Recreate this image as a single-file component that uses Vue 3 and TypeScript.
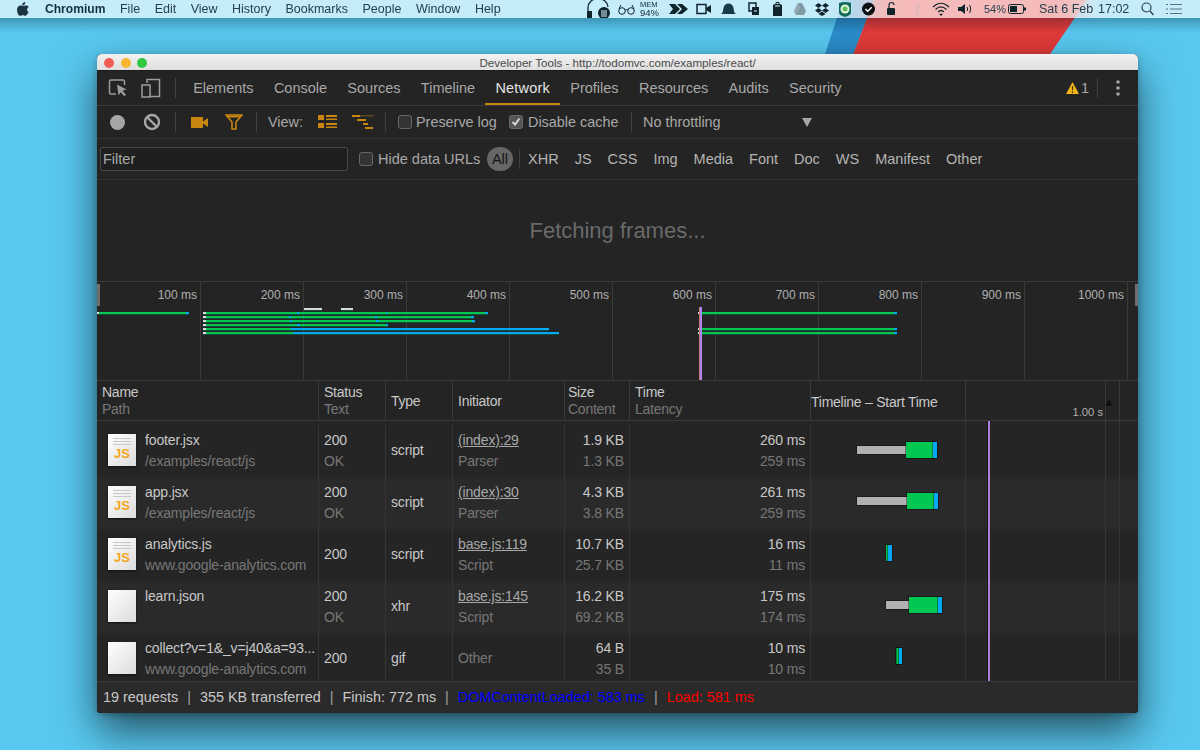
<script setup lang="ts">
interface Row {
  name: string; path: string; status: string; text: string; type: string;
  init: string; initSub: string; link: boolean; size: string; content: string;
  time: string; latency: string; js: boolean;
}
const tabs: string[] = ['Elements','Console','Sources','Timeline','Network','Profiles','Resources','Audits','Security'];
const menus: string[] = ['File','Edit','View','History','Bookmarks','People','Window','Help'];
const filters: string[] = ['XHR','JS','CSS','Img','Media','Font','Doc','WS','Manifest','Other'];
const ticks: string[] = ['100 ms','200 ms','300 ms','400 ms','500 ms','600 ms','700 ms','800 ms','900 ms','1000 ms'];
const rows: Row[] = [
  { name:'footer.jsx', path:'/examples/react/js', status:'200', text:'OK', type:'script', init:'(index):29', initSub:'Parser', link:true, size:'1.9 KB', content:'1.3 KB', time:'260 ms', latency:'259 ms', js:true },
  { name:'app.jsx', path:'/examples/react/js', status:'200', text:'OK', type:'script', init:'(index):30', initSub:'Parser', link:true, size:'4.3 KB', content:'3.8 KB', time:'261 ms', latency:'259 ms', js:true },
  { name:'analytics.js', path:'www.google-analytics.com', status:'200', text:'', type:'script', init:'base.js:119', initSub:'Script', link:true, size:'10.7 KB', content:'25.7 KB', time:'16 ms', latency:'11 ms', js:true },
  { name:'learn.json', path:'', status:'200', text:'OK', type:'xhr', init:'base.js:145', initSub:'Script', link:true, size:'16.2 KB', content:'69.2 KB', time:'175 ms', latency:'174 ms', js:false },
  { name:'collect?v=1&_v=j40&a=93...', path:'www.google-analytics.com', status:'200', text:'', type:'gif', init:'Other', initSub:'', link:false, size:'64 B', content:'35 B', time:'10 ms', latency:'10 ms', js:false },
];
const G = '#00c853', B = '#03a9f4', W = '#d8d8d8';
// [left, top, width, colour], relative to the overview canvas
const ovRaw: [number, number, number, string][] = [
  [207,26,18,W],[244,26,12,W],
  [0,30,2,W],[2,30,87,G],[89,30,3,B],
  [106,30,3,W],[109,30,282,G],[200,30,2,B],[289,30,1,B],[388,30,3,B],
  [106,34,3,W],[109,34,268,G],[192,34,2,B],[278,34,2,B],[374,34,3,B],
  [106,38,3,W],[109,38,269,G],[193,38,2,B],[279,38,3,B],[375,38,3,B],
  [106,42,3,W],[109,42,182,G],[200,42,3,B],[289,42,2,B],
  [106,46,3,W],[109,46,85,G],[194,46,258,B],
  [106,50,3,W],[109,50,87,G],[196,50,266,B],
  [601,30,3,W],[604,30,193,G],[797,30,3,B],
  [601,46,3,W],[604,46,193,G],[797,46,3,B],
  [601,50,3,W],[604,50,193,G],[797,50,3,B],
];
const ovBars = ovRaw.map(([left, top, width, background]) => ({
  left: left + 'px', top: top + 'px', width: width + 'px', background,
}));
// waterfall segments relative to the timeline column body
const wfRaw: [number, number, number, number, string][] = [
  [47,25,49,8,'#b0b0b0'],[96,21,27,16,G],[123,21,4,16,B],
  [47,76,50,8,'#b0b0b0'],[97,72,27,16,G],[124,72,4,16,B],
  [76,124,2,16,G],[78,124,4,16,B],
  [76,180,23,8,'#b0b0b0'],[99,176,29,16,G],[128,176,4,16,B],
  [86,227,1,16,G],[87,227,2,16,G],[89,227,3,16,B],
];
const wfBars = wfRaw.map(([left, top, width, height, background]) => ({
  left: left + 'px', top: top + 'px', width: width + 'px', height: height + 'px', background,
}));
</script>

<template>
  <div class="desktop">
    <svg class="stripe" width="400" height="60" viewBox="0 0 400 60">
      <polygon points="43,0 23,60 51,60 74,0" fill="#2b8cc8" />
      <polygon points="74,0 51,60 246,60 287,0" fill="#e03a3a" />
    </svg>
    <header class="menubar">
      <svg class="apple" width="12" height="14" viewBox="0 0 12 14"><path d="M8.3 0c.1 1-.3 1.900-.8 2.500-.6.700-1.500 1.100-2.300 1 -.1-.9.300-1.900.8-2.400C6.600.5 7.600.1 8.300 0zM11.500 10.200c-.3.700-.5 1-.9 1.600-.6.900-1.400 2-2.400 2-.9 0-1.200-.6-2.400-.6s-1.600.6-2.500.6c-1 0-1.800-1-2.400-1.900C-.1 9.500-.3 6.700.7 5.200c.7-1 1.800-1.700 2.900-1.700s1.800.6 2.700.6c.9 0 1.400-.6 2.700-.6 1 0 2 .5 2.700 1.400-2.400 1.300-2 4.700.300 5.300z" fill="#1c3440"/></svg>
      <span class="app-name">Chromium</span>
      <span v-for="m in menus" :key="m" class="menu-item">{{ m }}</span>
      <div class="tray">
        <svg class="t6" width="27" height="18" viewBox="0 0 27 18"><path d="M3 15V8a9 8 0 0 1 20-1" fill="none" stroke="#10242c" stroke-width="1.300"/><rect x="2" y="11" width="5" height="7" fill="#10242c"/><circle cx="19" cy="13" r="6" fill="#10242c"/><path d="M17 10v7M19 10v7M21 10v7" stroke="#d8f4fd"/></svg>
        <svg class="t5" width="17" height="18" viewBox="0 0 17 18"><circle cx="4" cy="11" r="3.300" fill="none" stroke="#10242c"/><circle cx="13" cy="11" r="3.300" fill="none" stroke="#10242c"/><path d="M7 10c1-.6 2-.6 3 0M1 9l2-4M16 9l-2-4" fill="none" stroke="#10242c"/></svg>
        <div class="mem t9"><span>MEM</span><span class="mem-val">94%</span></div>
        <svg class="t8" width="19" height="18" viewBox="0 0 19 18"><path d="M0 4h6l5 5-5 5H0l4-5zM8 4h5l6 5-6 5H8l5-5z" fill="#10242c"/></svg>
        <svg class="t9" width="15" height="18" viewBox="0 0 15 18"><rect x="1" y="4.500" width="9" height="9" fill="none" stroke="#10242c" stroke-width="1.500"/><path d="M10 8l5-3v8l-5-3z" fill="#10242c"/></svg>
        <svg class="t11" width="17" height="18" viewBox="0 0 17 18"><path d="M1 14c2-1 2-3 2.500-6C4 5 6 3.500 8.500 3.500S13 5 13.500 8c.5 3 .5 5 2.500 6z" fill="#163a46"/></svg>
        <svg class="t12" width="12" height="18" viewBox="0 0 12 18"><rect x="1" y="3" width="7" height="8" fill="none" stroke="#10242c" stroke-width="1.500"/><rect x="4" y="7" width="7" height="8" fill="#10242c"/><path d="M6 11h3" stroke="#d8f4fd"/></svg>
        <svg class="t11" width="11" height="18" viewBox="0 0 11 18"><path d="M4 4V2.500h3V4" fill="none" stroke="#10242c"/><path d="M1 5l2-1h5l2 1v11H1z" fill="#10242c"/><path d="M3 6h5" stroke="#d8f4fd"/></svg>
        <svg class="t9" width="12" height="18" viewBox="0 0 12 18"><path d="M4 3h4l4 8-2 4H2l-2-4z" fill="#7f9aa3"/><path d="M4 3l2 4-4 8-2-4z" fill="#94aab2"/></svg>
        <svg class="t9" width="14" height="18" viewBox="0 0 14 18"><path d="M3.500 3L7 5.500 3.500 8 0 5.500zM10.500 3L14 5.500 10.500 8 7 5.500zM3.500 8L7 10.500 3.500 13 0 10.500zM10.500 8L14 10.500 10.500 13 7 10.500zM3.500 14L7 11.500l3.500 2.500L7 16z" fill="#10242c"/></svg>
        <svg class="t10" width="14" height="18" viewBox="0 0 14 18"><path d="M1 3c4-1.500 8-1.500 12 0v9c0 3-3 4-6 5-3-1-6-2-6-5z" fill="#0f6a58"/><circle cx="7" cy="9" r="4.500" fill="#e5f5e0"/><circle cx="7" cy="9" r="2.500" fill="#5cc05a"/></svg>
        <svg class="t11" width="13" height="18" viewBox="0 0 13 18"><circle cx="6.500" cy="9" r="6.500" fill="#0b0f14"/><path d="M3.500 9l2.200 2.200 4-4" fill="none" stroke="#fff" stroke-width="1.500"/></svg>
        <svg class="t18" width="10" height="18" viewBox="0 0 10 18"><path d="M3 8V5a2.500 2.500 0 0 1 5 0" fill="none" stroke="#10242c" stroke-width="1.200"/><rect x="1" y="8" width="8" height="7" rx="1" fill="#10242c"/></svg>
        <svg class="t11" width="7" height="18" viewBox="0 0 7 18"><path d="M0 6l6 6-3 3V3l3 3-6 6" fill="none" stroke="#d8b8b8" stroke-width="1"/></svg>
        <svg class="t8" width="18" height="18" viewBox="0 0 18 18"><path d="M1 7c5-5 11-5 16 0M3.500 9.500c3.500-3.300 7.500-3.300 11 0M6 12c2-2 4-2 6 0" fill="none" stroke="#10242c" stroke-width="1.200"/><path d="M9 16l-1.800-2c1-.8 2.600-.8 3.600 0z" fill="#10242c"/></svg>
        <svg class="t12" width="14" height="18" viewBox="0 0 14 18"><path d="M0 7h3l4-3v10l-4-3H0z" fill="#10242c"/><path d="M9 7c.8 1.200.8 2.800 0 4M11.500 5c1.500 2.500 1.500 5.500 0 8" fill="none" stroke="#10242c"/></svg>
        <span class="tray-text pct t3">54%</span>
        <svg class="t13" width="18" height="18" viewBox="0 0 18 18"><rect x=".5" y="4.500" width="15" height="9" rx="2" fill="none" stroke="#10242c"/><rect x="2" y="6" width="7" height="6" fill="#10242c"/><rect x="16" y="7.500" width="2" height="3" fill="#10242c"/></svg>
        <span class="tray-text date">Sat 6 Feb</span>
        <span class="tray-text clock">17:02</span>
        <svg class="t12" width="13" height="18" viewBox="0 0 13 18"><circle cx="5.500" cy="7.500" r="4.500" fill="none" stroke="#2a3f48" stroke-width="1.200"/><path d="M9 11l3.500 4" stroke="#2a3f48" stroke-width="1.300"/></svg>
        <svg width="16" height="18" viewBox="0 0 16 18"><path d="M0 4.500h2M4 4.500h12M0 9h2M4 9h12M0 13.500h2M4 13.500h12" stroke="#5a7680"/></svg>
      </div>
    </header>

    <main class="window">
      <div class="titlebar">
        <span class="light red"></span><span class="light amber"></span><span class="light green"></span>
        <span class="title">Developer Tools - http://todomvc.com/examples/react/</span>
      </div>

      <nav class="tabbar">
        <svg class="ic-inspect" width="20" height="20" viewBox="0 0 20 20"><path d="M8 16H3a1.500 1.500 0 0 1-1.500-1.500v-11A1.500 1.500 0 0 1 3 2h12a1.500 1.500 0 0 1 1.500 1.500V7" fill="none" stroke="#9c9c9c" stroke-width="1.500"/><path d="M9 6.500l9.500 5-4 1.300 3.500 4-1.800 1.500-3.300-4-2.400 3z" fill="#9c9c9c"/></svg>
        <svg class="ic-device" width="20" height="20" viewBox="0 0 20 20"><path d="M6 5V1.500h12.500v17H9" fill="none" stroke="#9c9c9c" stroke-width="1.500"/><rect x="1" y="7" width="8" height="12" fill="none" stroke="#9c9c9c" stroke-width="1.500"/></svg>
        <span class="divider tab-divider"></span>
        <span v-for="t in tabs" :key="t" class="tab" :class="{ active: t === 'Network' }">{{ t }}</span>
        <div class="tab-right">
          <svg width="13" height="12" viewBox="0 0 13 12"><path d="M6.500 0l6.500 12H0z" fill="#f2b61d"/><path d="M5.800 4h1.400l-.2 4.500H6zM5.800 9.500h1.400V11H5.800z" fill="#4a3500"/></svg>
          <span class="warn-count">1</span>
          <span class="divider warn-divider"></span>
          <svg width="4" height="18" viewBox="0 0 4 18"><circle cx="2" cy="3" r="1.800" fill="#a6a6a6"/><circle cx="2" cy="9" r="1.800" fill="#a6a6a6"/><circle cx="2" cy="15" r="1.800" fill="#a6a6a6"/></svg>
        </div>
      </nav>

      <div class="toolbar">
        <span class="record"></span>
        <svg class="ic-clear" width="18" height="18" viewBox="0 0 18 18"><circle cx="9" cy="9" r="7" fill="none" stroke="#a6a6a6" stroke-width="2.400"/><path d="M4 4l10 10" stroke="#a6a6a6" stroke-width="2.400"/></svg>
        <span class="divider d-a"></span>
        <svg class="ic-cam" width="17" height="11" viewBox="0 0 17 11"><rect width="12" height="11" fill="#c88610"/><path d="M12 4.500l5-3.500v9l-5-3.500z" fill="#c88610"/></svg>
        <svg class="ic-funnel" width="18" height="16" viewBox="0 0 18 16"><path d="M1 1h16l-6 7v7H7V8z" fill="none" stroke="#c88610" stroke-width="1.600"/><path d="M2 1.500h14l-1.500 2H3.500z" fill="#c88610"/></svg>
        <span class="divider d-b"></span>
        <span class="label view-label">View:</span>
        <svg class="ic-list" width="19" height="14" viewBox="0 0 19 14"><g fill="#c88610"><rect width="6" height="5"/><rect y="8" width="6" height="5"/><rect x="8" width="11" height="2"/><rect x="8" y="3.500" width="11" height="1.500"/><rect x="8" y="8" width="11" height="2"/><rect x="8" y="11.500" width="11" height="1.500"/></g></svg>
        <svg class="ic-fall" width="22" height="14" viewBox="0 0 22 14"><rect width="22" height="1.500" fill="#5c4a20"/><g fill="#c88610"><rect y="0" width="8" height="2"/><rect x="5" y="4" width="9" height="2"/><rect x="11" y="8" width="5" height="2"/><rect x="13" y="12" width="8" height="2"/></g></svg>
        <span class="divider d-c"></span>
        <span class="check"></span><span class="label preserve">Preserve log</span>
        <span class="check checked"><svg width="14" height="14" viewBox="0 0 14 14"><path d="M3 7l3 3 5-7" fill="none" stroke="#dcdcdc" stroke-width="2.200"/></svg></span>
        <span class="label cache">Disable cache</span>
        <span class="divider d-d"></span>
        <span class="label throttle">No throttling</span>
        <span class="caret"></span>
      </div>

      <div class="filterbar">
        <div class="filter-input">Filter</div>
        <span class="check hide-check"></span><span class="label hide-label">Hide data URLs</span>
        <span class="pill">All</span>
        <span class="divider d-e"></span>
        <span v-for="f in filters" :key="f" class="filter-item">{{ f }}</span>
      </div>

      <div class="frames">Fetching frames...</div>

      <section class="overview">
        <div class="ov-grid">
          <div v-for="t in ticks" :key="t" class="ov-col">{{ t }}</div>
        </div>
        <span class="handle left"></span><span class="handle right"></span>
        <span v-for="(b, i) in ovBars" :key="i" class="ov-bar" :style="b"></span>
        <span class="ov-load"></span><span class="ov-dom"></span>
      </section>

      <section class="table">
        <div class="thead">
          <div class="th two"><span>Name</span><span class="sub">Path</span></div>
          <div class="th two"><span>Status</span><span class="sub">Text</span></div>
          <div class="th"><span>Type</span></div>
          <div class="th"><span>Initiator</span></div>
          <div class="th two size-head"><span>Size</span><span class="sub">Content</span></div>
          <div class="th two"><span>Time</span><span class="sub">Latency</span></div>
          <div class="th timeline-head">
            <span class="th-tl">Timeline – Start Time</span>
            <span class="th-sec">1.00 s</span>
            <span class="th-sort"></span>
            <span class="th-end"></span>
          </div>
        </div>
        <div class="tbody">
          <div v-for="r in rows" :key="r.name" class="tr">
            <div class="td name-cell">
              <div class="file-icon" :class="{ blank: !r.js }">
                <template v-if="r.js"><span class="file-lines"></span><span class="js">JS</span></template>
              </div>
              <div class="stack name-stack">
                <span class="main">{{ r.name }}</span>
                <span v-if="r.path" class="sub">{{ r.path }}</span>
              </div>
            </div>
            <div class="td stack" :class="{ centered: !r.text }">
              <span class="main">{{ r.status }}</span>
              <span v-if="r.text" class="sub">{{ r.text }}</span>
            </div>
            <div class="td stack centered"><span class="main">{{ r.type }}</span></div>
            <div class="td stack" :class="{ centered: !r.initSub }">
              <span :class="r.link ? 'main link' : 'sub'">{{ r.init }}</span>
              <span v-if="r.initSub" class="sub">{{ r.initSub }}</span>
            </div>
            <div class="td stack right"><span class="main">{{ r.size }}</span><span class="sub">{{ r.content }}</span></div>
            <div class="td stack right"><span class="main">{{ r.time }}</span><span class="sub">{{ r.latency }}</span></div>
            <div class="td"></div>
          </div>
          <div class="waterfall">
            <span class="wf-line a"></span><span class="wf-line b"></span><span class="wf-line c"></span>
            <span class="wf-event"></span>
            <span v-for="(b, i) in wfBars" :key="i" class="wf-bar" :style="b"></span>
          </div>
        </div>
      </section>

      <footer class="statusbar">
        <span>19 requests</span><span class="sep">|</span>
        <span>355 KB transferred</span><span class="sep">|</span>
        <span>Finish: 772 ms</span><span class="sep">|</span>
        <span class="dom">DOMContentLoaded: 583 ms</span><span class="sep">|</span>
        <span class="load">Load: 581 ms</span>
      </footer>
    </main>
  </div>
</template>

<style>
html, body { margin: 0; background: #58c8f0; }
</style>

<style scoped>
.desktop {
  position: relative; width: 1200px; height: 750px; overflow: hidden;
  background: #58c8f0;
  font-family: "Liberation Sans", Arial, sans-serif; color: #c8c8c8;
}
.stripe { position: absolute; left: 800px; top: 0; }
.menubar {
  position: relative; height: 18px; display: flex; align-items: center;
  background: rgba(255, 255, 255, 0.66); backdrop-filter: blur(12px);
  font-size: 12.500px; color: #24404c; line-height: 18px;
}
.menubar::after {
  content: ""; position: absolute; left: 0; right: 0; top: 18px; height: 14px;
  background: linear-gradient(rgba(0, 20, 40, 0.28), rgba(0, 20, 40, 0));
}
.apple { margin-left: 17px; margin-right: 16px; }
.app-name { font-weight: 700; font-size: 12.100px; color: #14303c; margin-right: 14.500px; }
.menu-item { margin-right: 14.500px; }
.tray { position: absolute; left: 585px; top: 0; height: 18px; display: flex; align-items: center; }
.t3 { margin-right: 3px; } .t5 { margin-right: 5px; } .t6 { margin-right: 6px; } .t8 { margin-right: 8px; }
.t9 { margin-right: 9px; } .t10 { margin-right: 10px; } .t11 { margin-right: 11px; } .t12 { margin-right: 12px; }
.t13 { margin-right: 13px; } .t18 { margin-right: 18px; }
.mem { width: 20px; display: flex; flex-direction: column; font-size: 7.500px; line-height: 7.500px; color: #10242c; }
.mem-val { font-size: 9.500px; line-height: 9px; }
.tray-text { color: #24404c; white-space: nowrap; }
.pct { width: 21px; font-size: 11px; }
.date { width: 59px; } .clock { width: 29px; margin-right: 14px; }

.window {
  position: relative; margin: 36px 0 0 97px; width: 1041px; height: 659px;
  border-radius: 5px 5px 4px 4px; overflow: hidden; background: #242424;
  display: flex; flex-direction: column;
}
.desktop::after {
  content: ""; position: absolute; left: 97px; top: 54px; width: 1041px; height: 659px; border-radius: 5px;
  box-shadow: 0 18px 40px rgba(0, 0, 0, 0.6), 0 2px 6px rgba(0, 0, 0, 0.25); pointer-events: none;
}
.titlebar {
  position: relative; height: 17px; flex: none; display: flex; align-items: center; justify-content: center;
  background: linear-gradient(#f2f2f2, #dedede); border-bottom: 1px solid #1a1a1a; box-sizing: border-box;
}
.light { position: absolute; top: 4px; width: 10px; height: 10px; border-radius: 50%; }
.light.red { left: 7px; background: #f25a55; }
.light.amber { left: 24px; background: #f8b630; }
.light.green { left: 40px; background: #30c840; }
.title { font-size: 11.600px; color: #4a4a4a; white-space: nowrap; }

.tabbar {
  height: 35px; flex: none; display: flex; align-items: center; background: #242424;
  border-bottom: 1px solid #3a3a3a; box-sizing: border-box; font-size: 14.500px;
}
.ic-inspect { margin-left: 11px; } .ic-device { margin-left: 13px; }
.divider { width: 1px; height: 20px; background: #404040; flex: none; }
.tab-divider { margin: 0 7px 0 14px; }
.tab { height: 34px; line-height: 35px; padding: 0 10.150px; box-sizing: border-box; color: #a8a8a8; white-space: nowrap; }
.tab.active { color: #e4e4e4; letter-spacing: 0.2px; border-bottom: 2px solid #c8860f; }
.tab-right { margin-left: auto; display: flex; align-items: center; margin-right: 18px; }
.warn-count { margin-left: 2px; color: #a8a8a8; }
.warn-divider { margin: 0 18px 0 8px; }

.toolbar {
  height: 33px; flex: none; display: flex; align-items: center; background: #242424;
  border-bottom: 1px solid #333; box-sizing: border-box; font-size: 14.400px;
}
.record { width: 15px; height: 15px; border-radius: 50%; background: #a6a6a6; margin-left: 13px; }
.ic-clear { margin-left: 18px; }
.d-a { margin-left: 14px; } .ic-cam { margin-left: 15px; } .ic-funnel { margin-left: 17px; }
.d-b { margin-left: 13px; }
.label { color: #a8a8a8; white-space: nowrap; }
.view-label { margin-left: 11px; width: 35px; }
.ic-list { margin-left: 15px; } .ic-fall { margin-left: 15px; }
.d-c { margin-left: 11px; }
.check { width: 14px; height: 14px; border-radius: 3px; background: #333; border: 1px solid #666; box-sizing: border-box; flex: none; margin-left: 12px; display: flex; align-items: center; justify-content: center; }
.check.checked { background: #555; border-color: #6c6c6c; margin-left: 13px; }
.preserve { margin-left: 4px; width: 80px; }
.cache { margin-left: 5px; width: 91px; }
.d-d { margin-left: 12px; }
.throttle { margin-left: 11px; width: 80px; }
.caret { margin-left: 79px; width: 0; height: 0; border-left: 5px solid transparent; border-right: 5px solid transparent; border-top: 9px solid #a6a6a6; }

.filterbar {
  height: 41px; flex: none; display: flex; align-items: center; background: #242424;
  border-bottom: 1px solid #333; box-sizing: border-box; font-size: 14.500px; color: #b4b4b4;
}
.filter-input {
  width: 248px; height: 24px; margin-left: 3px; box-sizing: border-box; border: 1px solid #484848; border-radius: 2px;
  background: #1f1f1f; line-height: 22px; padding-left: 2px; color: #a8a8a8;
}
.hide-check { margin-left: 11px; }
.hide-label { margin-left: 5px; width: 101px; }
.pill { margin-left: 8px; width: 26px; height: 24px; border-radius: 12px; background: #666; color: #141414; text-align: center; line-height: 24px; }
.d-e { margin-left: 6px; margin-right: 8px; }
.filter-item { margin-right: 16px; color: #b4b4b4; white-space: nowrap; }

.frames { height: 101px; flex: none; display: flex; align-items: center; justify-content: center; font-size: 22px; color: #6a6a6a; background: #242424; }

.overview { position: relative; height: 100px; flex: none; border-top: 1px solid #3a3a3a; border-bottom: 1px solid #3a3a3a; box-sizing: border-box; background: #242424; }
.ov-grid { display: flex; height: 100%; padding-left: 1px; }
.ov-col { width: 103px; flex: none; box-sizing: border-box; border-right: 1px solid #3a3a3a; text-align: right; padding: 6px 3px 0 0; font-size: 12px; line-height: 14px; color: #b0b0b0; white-space: nowrap; }
.handle { position: absolute; top: 2px; width: 3px; height: 22px; background: #6e6e6e; }
.handle.left { left: 0; } .handle.right { right: 0; }
.ov-bar { position: absolute; height: 2px; box-shadow: 0 1px 0 rgba(0, 120, 80, 0.5); }
.ov-load { position: absolute; left: 602px; top: 25px; bottom: 0; width: 1px; background: #d07070; }
.ov-dom { position: absolute; left: 603px; top: 25px; bottom: 0; width: 1.500px; background: #a888f0; }

.table { flex: 1; display: flex; flex-direction: column; min-height: 0; }
.thead, .tr { display: grid; grid-template-columns: 222px 67px 67px 112px 65px 181px 1fr; }
.thead { height: 39px; flex: none; border-bottom: 1px solid #3a3a3a; box-sizing: content-box; font-size: 14px; letter-spacing: -0.25px; }
.th { display: flex; align-items: center; padding-left: 5px; padding-top: 1px; box-sizing: border-box; border-right: 1px solid #3a3a3a; color: #c8c8c8; position: relative; }
.th.two { flex-direction: column; align-items: flex-start; justify-content: center; line-height: 17px; }
.th.size-head { padding-left: 3px; }
.timeline-head { padding: 0; border-right: none; }
.th-tl { width: 155px; padding-top: 2px; box-sizing: border-box; height: 100%; display: flex; align-items: center; border-right: 1px solid #3a3a3a; white-space: nowrap; }
.th-sec { position: absolute; left: 155px; width: 140px; box-sizing: border-box; height: 100%; border-right: 1px solid #3a3a3a; text-align: right; padding: 23px 2px 0 0; font-size: 11.200px; letter-spacing: 0; line-height: 17px; color: #b0b0b0; }
.th-sort { position: absolute; left: 294px; top: 18px; width: 0; height: 0; border-left: 4px solid transparent; border-right: 4px solid transparent; border-bottom: 7px solid #111; }
.th-end { position: absolute; left: 308px; top: 0; height: 100%; width: 1px; background: #3a3a3a; }
.sub { color: #777; }

.tbody { position: relative; flex: 1; min-height: 0; overflow: hidden; padding-top: 4px; background: #252525; box-sizing: border-box; }
.tr { height: 52px; font-size: 14px; letter-spacing: -0.15px; background: #252525; }
.tr:nth-child(even) { background: #2a2a2a; }
.td { border-right: 1px solid #353535; display: flex; box-sizing: border-box; min-width: 0; }
.td:last-child { border-right: none; }
.stack { flex-direction: column; justify-content: space-between; padding: 7px 5px 7px 5px; line-height: 17px; white-space: nowrap; }
.stack.centered { justify-content: center; padding-top: 7px; padding-bottom: 9px; }
.stack.right { align-items: flex-end; }
.main { color: #c8c8c8; }
.link { text-decoration: underline; color: #a8a8a8; }
.name-cell { align-items: center; padding-left: 11px; position: relative; }
.name-stack { display: flex; height: 100%; box-sizing: border-box; padding: 7px 0 7px 9px; }
.file-icon { position: relative; width: 28px; height: 32px; flex: none; margin-bottom: 2px; box-sizing: border-box; background: linear-gradient(135deg, #fff, #dcdcdc); box-shadow: 0 1px 2px rgba(0,0,0,.6); }
.file-lines { position: absolute; left: 5px; right: 5px; top: 4px; height: 8px; background: repeating-linear-gradient(#c8c8c8 0 1px, transparent 1px 3px); }
.js { position: absolute; left: 0; right: 0; top: 13px; text-align: center; font-size: 13px; letter-spacing: 0; line-height: 14px; font-weight: 700; color: #f5a623; }

.waterfall { position: absolute; left: 713px; right: 0; top: 0; bottom: 0; pointer-events: none; }
.wf-line { position: absolute; top: 0; bottom: 0; width: 1px; background: #353535; }
.wf-line.a { left: 155px; } .wf-line.b { left: 295px; } .wf-line.c { left: 309px; }
.wf-event { position: absolute; left: 178px; top: 0; bottom: 0; width: 2px; background: #a880d8; box-shadow: -1px 0 0 #1a1a1a; }
.wf-bar { position: absolute; outline: 1px solid rgba(0, 0, 0, 0.35); }

.statusbar {
  height: 32px; flex: none; display: flex; align-items: center; padding: 0 0 1px 6px; background: #2a2a2a;
  border-top: 1px solid #3a3a3a; box-sizing: border-box; font-size: 14.400px; color: #c8c8c8; white-space: nowrap;
}
.sep { margin: 0 9px; color: #a0a0a0; }
.dom { color: #0000ff; } .load { color: #ff0000; }
</style>
